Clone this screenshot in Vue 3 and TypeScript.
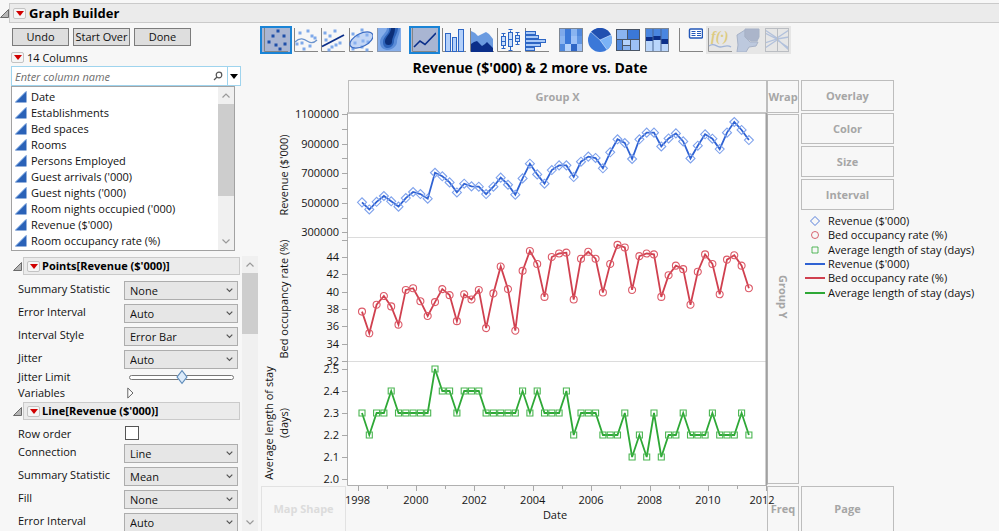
<script setup lang="ts">
import { ref } from 'vue'

type Shape = 'diamond' | 'circle' | 'square'
interface Series {
  label: string
  shape: Shape
  line: string
  mark: string
  values: number[]
  y: (v: number) => number
}

const columns = [
  'Date', 'Establishments', 'Bed spaces', 'Rooms', 'Persons Employed',
  "Guest arrivals ('000)", "Guest nights ('000)", "Room nights occupied ('000)",
  "Revenue ($'000)", 'Room occupancy rate (%)',
]

const pointSettings = [
  { id: 'p-stat', label: 'Summary Statistic', value: 'None' },
  { id: 'p-err', label: 'Error Interval', value: 'Auto' },
  { id: 'p-style', label: 'Interval Style', value: 'Error Bar' },
  { id: 'p-jitter', label: 'Jitter', value: 'Auto' },
]
const lineSettings = [
  { id: 'l-conn', label: 'Connection', value: 'Line' },
  { id: 'l-stat', label: 'Summary Statistic', value: 'Mean' },
  { id: 'l-fill', label: 'Fill', value: 'None' },
  { id: 'l-err', label: 'Error Interval', value: 'Auto' },
]

const filter = ref('')
const jitter = ref(50)
const rowOrder = ref(false)

const series: Series[] = [
  {
    label: "Revenue ($'000)", shape: 'diamond', line: '#2f62d3', mark: '#7fa2ec',
    values: [503, 455, 507, 546, 510, 474, 532, 573, 559, 528, 703, 679, 638, 570, 629, 611, 609, 559,
      609, 670, 622, 555, 665, 764, 692, 629, 721, 753, 753, 674, 778, 812, 803, 733, 841, 929, 904, 796,
      929, 974, 974, 881, 935, 969, 915, 800, 886, 963, 933, 863, 974, 1046, 992, 924],
    y: (v) => 6 + (1100 - v) * 0.148,
  },
  {
    label: 'Bed occupancy rate (%)', shape: 'circle', line: '#d0404f', mark: '#dc5a68',
    values: [37.7, 35.2, 38.5, 39.5, 38.3, 36.2, 40.2, 40.4, 38.9, 37.2, 38.8, 40.3, 39.6, 36.6, 39.7,
      39.1, 40.2, 35.8, 39.8, 42.9, 40.3, 35.5, 42.4, 44.7, 43.2, 39.4, 44, 44.4, 44.5, 39.1, 43.8, 44.6,
      43.8, 39.9, 43.2, 45.4, 45.1, 40.2, 44.1, 44.4, 44.3, 39.4, 41.9, 43, 42.6, 38.5, 42.3, 44.3, 43.2,
      39.7, 43.7, 44.2, 43, 40.4],
    y: (v) => 149 + (44 - v) * 8.67,
  },
  {
    label: 'Average length of stay (days)', shape: 'square', line: '#2ea836', mark: '#4ab551',
    values: [2.3, 2.2, 2.3, 2.3, 2.4, 2.3, 2.3, 2.3, 2.3, 2.3, 2.5, 2.4, 2.4, 2.3, 2.4, 2.4, 2.4, 2.3,
      2.3, 2.3, 2.3, 2.3, 2.4, 2.3, 2.4, 2.3, 2.3, 2.3, 2.4, 2.2, 2.3, 2.3, 2.3, 2.2, 2.2, 2.2, 2.3, 2.1,
      2.2, 2.1, 2.3, 2.1, 2.2, 2.2, 2.3, 2.2, 2.2, 2.2, 2.3, 2.2, 2.2, 2.2, 2.3, 2.2],
    y: (v) => 261 + (2.5 - v) * 220,
  },
]

const px = (i: number) => 101 + i * 7.3
const path = (s: Series) => s.values.map((v, i) => `${px(i).toFixed(1)},${s.y(v).toFixed(1)}`).join(' ')
const markPath = (shape: Shape, x: number, y: number): string => {
  if (shape === 'diamond') return `M${x - 4.5} ${y}l4.5 -4.5l4.5 4.5l-4.5 4.5z`
  if (shape === 'square') return `M${x - 3} ${y - 3}h6v6h-6z`
  return `M${x - 3.5} ${y}a3.5 3.5 0 1 0 7 0a3.5 3.5 0 1 0 -7 0z`
}

const yTicks = [
  ...[1100, 900, 700, 500, 300].map((v) => ({ text: `${v}000`, y: series[0].y(v) })),
  ...[44, 42, 40, 38, 36, 34, 32].map((v) => ({ text: String(v), y: series[1].y(v) })),
  ...[2.5, 2.4, 2.3, 2.2, 2.1, 2.0].map((v) => ({ text: v.toFixed(1), y: series[2].y(v) })),
]
const minorY = [1000, 800, 600, 400].map((v) => series[0].y(v)).concat(132)
const years = Array.from({ length: 15 }, (_, i) => ({ year: 1998 + i, x: 96.5 + i * 29.2 }))

const zones = ['Overlay', 'Color', 'Size', 'Interval']

const iconGroups: { name: string; on?: boolean; off?: boolean }[][] = [
  [{ name: 'Points', on: true }, { name: 'Smoother' }, { name: 'Line of Fit' }, { name: 'Ellipse' }, { name: 'Contour' }],
  [{ name: 'Line', on: true }, { name: 'Bar' }, { name: 'Area' }, { name: 'Box Plot' }, { name: 'Histogram' }],
  [{ name: 'Heatmap' }, { name: 'Pie' }, { name: 'Treemap' }, { name: 'Mosaic' }],
  [{ name: 'Caption Box' }, { name: 'Formula', off: true }, { name: 'Map Shapes', off: true }, { name: 'Parallel', off: true }],
]
const noAxis = ['Contour', 'Heatmap', 'Pie', 'Treemap', 'Mosaic', 'Map Shapes', 'Parallel']

const dots: Record<string, number[][]> = {
  Points: [[14, 3], [9, 8], [20, 8], [5, 14], [12, 17], [21, 16], [16, 21]],
  Smoother: [[14, 3], [6, 5], [18, 8], [21, 10], [3, 16], [8, 15], [16, 18], [10, 21]],
  'Line of Fit': [[14, 3], [4, 5], [9, 8], [5, 12], [19, 15], [15, 17], [11, 19], [8, 22]],
  Ellipse: [[13, 2], [4, 6], [9, 8], [18, 7], [6, 15], [14, 13], [19, 14], [4, 21], [13, 19], [18, 22]],
}
const heat = ['#7fa9ea', '#3b78d8', '#8ab4f0', '#4f88dd', '#8ab4f0', '#3b78d8', '#9cc0f6', '#5f95e3',
  '#4f88dd', '#b4d2fb', '#2f66c6', '#9cc0f6']
</script>

<template>
  <div class="app">
    <header class="titlebar">
      <svg class="disclose" viewBox="0 0 9 9" width="9" height="9"><path d="M.5 8.5h8v-8z" /></svg>
      <div class="bar">
        <button class="red" aria-label="Graph Builder menu"><svg viewBox="0 0 8 5" width="8" height="5"><path d="M0 0h8L4 5z" /></svg></button>
        <h1>Graph Builder</h1>
      </div>
    </header>

    <div class="body">
      <aside class="left">
        <div class="actions">
          <button>Undo</button><button>Start Over</button><button>Done</button>
        </div>
        <div class="count">
          <button class="red" aria-label="Columns menu"><svg viewBox="0 0 8 5" width="8" height="5"><path d="M0 0h8L4 5z" /></svg></button>
          <span>14 Columns</span>
        </div>
        <div class="search">
          <input v-model="filter" type="text" placeholder="Enter column name" aria-label="Enter column name" />
          <svg class="lens" viewBox="0 0 10 10" width="10" height="10"><circle cx="6" cy="4" r="2.8" /><path d="M4 6L1 9" /></svg>
          <button aria-label="Search options"><svg viewBox="0 0 8 5" width="8" height="5"><path d="M0 0h8L4 5z" /></svg></button>
        </div>
        <div class="list">
          <ul>
            <li v-for="c in columns" :key="c">
              <svg viewBox="0 0 12 12" width="12" height="12"><path class="tri" d="M0 11.5H11.5V0z" /><path class="tri-edge" d="M.5 11L11 .5" /></svg>
              {{ c }}
            </li>
          </ul>
          <div class="scroll">
            <svg viewBox="0 0 8 5" width="8" height="5"><path d="M.5 4.5L4 1l3.5 3.5" /></svg>
            <i class="thumb"></i>
            <svg viewBox="0 0 8 5" width="8" height="5"><path d="M.5 .5L4 4 7.5 .5" /></svg>
          </div>
        </div>

        <div class="settings">
          <div class="panels">
            <section>
              <div class="sub">
                <svg class="disclose" viewBox="0 0 9 9" width="9" height="9"><path d="M.5 8.5h8v-8z" /></svg>
                <div class="bar">
                  <button class="red" aria-label="Points menu"><svg viewBox="0 0 8 5" width="8" height="5"><path d="M0 0h8L4 5z" /></svg></button>
                  <h2>Points[Revenue ($'000)]</h2>
                </div>
              </div>
              <div v-for="s in pointSettings" :key="s.id" class="field">
                <label :for="s.id">{{ s.label }}</label>
                <div class="drop">
                  <select :id="s.id"><option>{{ s.value }}</option></select>
                  <svg viewBox="0 0 7 5" width="7" height="5"><path d="M.7 .7L3.5 3.5 6.3 .7" /></svg>
                </div>
              </div>
              <div class="field slim">
                <label for="jitter">Jitter Limit</label>
                <input id="jitter" v-model="jitter" type="range" min="0" max="100" />
              </div>
              <div class="field slim">
                <span>Variables</span>
                <button class="expand" aria-label="Show variables"><svg viewBox="0 0 7 12" width="7" height="12"><path d="M.8 1v10L6 6z" /></svg></button>
              </div>
            </section>
            <section>
              <div class="sub">
                <svg class="disclose" viewBox="0 0 9 9" width="9" height="9"><path d="M.5 8.5h8v-8z" /></svg>
                <div class="bar">
                  <button class="red" aria-label="Line menu"><svg viewBox="0 0 8 5" width="8" height="5"><path d="M0 0h8L4 5z" /></svg></button>
                  <h2>Line[Revenue ($'000)]</h2>
                </div>
              </div>
              <div class="field check">
                <label for="order">Row order</label>
                <input id="order" v-model="rowOrder" type="checkbox" />
              </div>
              <div v-for="s in lineSettings" :key="s.id" class="field">
                <label :for="s.id">{{ s.label }}</label>
                <div class="drop">
                  <select :id="s.id"><option>{{ s.value }}</option></select>
                  <svg viewBox="0 0 7 5" width="7" height="5"><path d="M.7 .7L3.5 3.5 6.3 .7" /></svg>
                </div>
              </div>
            </section>
          </div>
          <div class="scroll tall">
            <svg viewBox="0 0 8 5" width="8" height="5"><path d="M.5 4.5L4 1l3.5 3.5" /></svg>
            <i class="thumb"></i>
            <svg viewBox="0 0 8 5" width="8" height="5"><path d="M.5 .5L4 4 7.5 .5" /></svg>
          </div>
        </div>
      </aside>

      <main class="work">
        <div class="tools">
          <div v-for="(g, gi) in iconGroups" :key="gi" class="group">
            <button v-for="t in g" :key="t.name" :class="{ on: t.on, off: t.off }" :disabled="t.off" :aria-label="t.name">
              <svg viewBox="0 0 24 24" width="24" height="24">
                <path v-if="!noAxis.includes(t.name)" class="axis" d="M.5 0V23.5H24" />
                <g v-if="dots[t.name]">
                  <rect v-for="(d, i) in dots[t.name]" :key="i" :x="d[0] - 1.5" :y="d[1] - 1.5" width="3" height="3" :fill="t.on ? '#1f4fa8' : '#7fa9ea'" />
                </g>
                <path v-if="t.name === 'Smoother'" d="M1 14C6 9 10 11 14 13.5S21 14 23 12" fill="none" stroke="#6b93cc" stroke-width="1.3" />
                <path v-if="t.name === 'Line of Fit'" d="M1 18.5L23 7" fill="none" stroke="#0b2f8a" stroke-width="1.8" />
                <ellipse v-if="t.name === 'Ellipse'" cx="12.5" cy="12" rx="12.5" ry="6.5" transform="rotate(-27 12.5 12)" fill="#8fb6f3" fill-opacity=".5" stroke="#3b6cc4" stroke-width="1.2" />
                <g v-if="t.name === 'Contour'">
                  <rect width="24" height="24" fill="#86aeea" />
                  <path d="M10 0C10 5 3 8 3 14s4 8 8 8 9-4 9-8 3-8 3-14z" fill="#5a8cd8" />
                  <path d="M12 0c1 6-6 8-6 14 0 4 2 6 5 6s6-3 6-7 4-8 4-13z" fill="#2c62b8" />
                  <path d="M14 0c0 6-6 9-6 13.5a3.5 3.5 0 0 0 7 0C15 10 18 6 18 0z" fill="#0c2f78" />
                  <path d="M.5 0v23.5H24" fill="none" stroke="#8a97ac" />
                </g>
                <path v-if="t.name === 'Line'" d="M2 19L8 13l5 3.5L24 5" fill="none" stroke="#0b2f8a" stroke-width="1.6" />
                <g v-if="t.name === 'Bar'" fill="#b3d0fa" stroke="#2d66c4">
                  <rect x="3.5" y="5.5" width="5" height="18" /><rect x="10.5" y="9.5" width="4" height="14" /><rect x="16.5" y="1.5" width="5" height="22" />
                </g>
                <g v-if="t.name === 'Area'">
                  <path d="M1 3l4 2 3 3 4-2 4-2 3 2 4 5v13H1z" fill="#6b9be0" />
                  <path d="M1 16l3-2 3-1 2 2 3 3 3-2 2-2 3 3 3 3v4H1z" fill="#0b2f8a" />
                </g>
                <g v-if="t.name === 'Box Plot'" fill="#c8defc" stroke="#2d66c4">
                  <path d="M6.5 5.5v15M13.5 2.5v20M20.5 4.5v12M4.5 5.5h4M11.5 1.5h4M18.5 4.5h4M4.5 20.5h4M11.5 22.5h4M18.5 16.5h4" />
                  <rect x="4.5" y="8.5" width="4" height="9" /><rect x="11.5" y="4.5" width="4" height="14" /><rect x="18.5" y="7.5" width="4" height="6" />
                  <path d="M4.5 13.5h4M11.5 11.5h4M18.5 10.5h4" />
                </g>
                <g v-if="t.name === 'Histogram'" fill="#a9caf8" stroke="#2d66c4">
                  <rect x=".5" y="3.5" width="10" height="3" /><rect x=".5" y="7.5" width="13" height="3" /><rect x=".5" y="11.5" width="20" height="3" /><rect x=".5" y="15.5" width="15" height="3" /><rect x=".5" y="19.5" width="9" height="3" />
                </g>
                <g v-if="t.name === 'Heatmap'">
                  <rect v-for="(c, i) in heat" :key="i" :x="(i % 4) * 6" :y="Math.floor(i / 4) * 8" width="6" height="8" :fill="c" />
                  <rect x=".5" y=".5" width="23" height="23" fill="none" stroke="#7d8794" />
                </g>
                <g v-if="t.name === 'Pie'">
                  <circle cx="12" cy="12" r="12" fill="#3b78d8" />
                  <path d="M12 12L3 4A12 12 0 0 1 23 7z" fill="#2150b0" />
                  <path d="M12 12L23 7A12 12 0 0 1 19 21.7z" fill="#7ab2f6" />
                  <path d="M3 4l9 8 11-5M12 12l7 9.7" fill="none" stroke="#dce9fb" stroke-width=".6" />
                </g>
                <g v-if="t.name === 'Treemap'" stroke="#4a5566">
                  <rect x=".5" y="1.5" width="11" height="10" fill="#8ab4f0" /><rect x="11.5" y="1.5" width="12" height="10" fill="#3b78d8" />
                  <rect x=".5" y="11.5" width="6" height="11" fill="#4f88dd" /><rect x="6.5" y="11.5" width="8" height="6" fill="#b4d2fb" /><rect x="6.5" y="17.5" width="8" height="5" fill="#8ab4f0" /><rect x="14.5" y="11.5" width="9" height="11" fill="#9cc0f6" />
                </g>
                <g v-if="t.name === 'Mosaic'">
                  <rect width="24" height="24" fill="#b9d5fb" />
                  <path d="M0 0h8v9H0zM8 0h8v8H8zM16 0h8v11h-8z" fill="#4a86e0" />
                  <path d="M0 9h8v4H0zM8 8h8v4H8zM16 11h8v5h-8z" fill="#0b2f8a" />
                  <path d="M8 0v24M16 0v24" stroke="#4a6694" /><rect x=".5" y=".5" width="23" height="23" fill="none" stroke="#7d8794" />
                </g>
                <g v-if="t.name === 'Caption Box'">
                  <rect x="10.5" y="1" width="13" height="9" rx="1" fill="#fff" stroke="#2458b8" stroke-width="1.5" />
                  <path d="M12.5 3.5h4M12.5 5.5h4M12.5 7.5h4M18 3.5h4M18 5.5h4M18 7.5h4" stroke="#2458b8" />
                </g>
                <g v-if="t.name === 'Formula'">
                  <text class="fx" x="3" y="13">f(·)</text>
                  <path d="M1 18c5-4 7 1 11 1s7-3 11 0" fill="none" stroke="#8fa8d4" stroke-width="1.3" />
                </g>
                <g v-if="t.name === 'Map Shapes'" stroke="#98a6c0">
                  <path d="M1 7L9 2v7l5 5h8l-2 4-7 1-3 5H1l1-7z" fill="#b4c3dd" />
                  <path d="M9 1h14v8l-2 4h-6l-6-4z" fill="#9da9c4" />
                </g>
                <g v-if="t.name === 'Parallel'" fill="none">
                  <path d="M0 2l12 8L24 2M0 5l12 6 12-2M0 20l12-8 12 8M0 15l12-4 12 11" stroke="#a5b8da" stroke-width="1.3" />
                  <path d="M.5 0v24M12.5 0v24M23.5 0v24M0 .5h24M0 23.5h24" stroke="#b0b4ba" />
                </g>
              </svg>
            </button>
          </div>
        </div>

        <div class="graph">
          <h3>Revenue ($'000) &amp; 2 more vs. Date</h3>
          <button class="zone groupx">Group X</button>
          <button class="zone wrap">Wrap</button>
          <button class="zone groupy"><span>Group Y</span></button>
          <button class="zone freq">Freq</button>
          <button class="zone page">Page</button>
          <button class="zone faint map">Map Shape</button>

          <svg class="plot" viewBox="0 0 506 417" role="img" aria-label="Revenue, bed occupancy rate and average length of stay by date">
            <rect x="86" y="5" width="420" height="372" fill="#fff" />
            <path d="M87 129.5H505M87 253.5H505" stroke="#dcdcdc" />
            <path d="M86 5H506" stroke="#c6c6c6" stroke-width="2" />
            <path d="M86.5 5V377.5H506" fill="none" stroke="#b0b0b0" />
            <path d="M505.5 5V377" stroke="#a0a0a0" stroke-width="2" />
            <g class="ticks">
              <path v-for="t in yTicks" :key="t.text" :d="`M81 ${Math.round(t.y) + 0.5}h6`" />
              <path v-for="m in minorY" :key="m" :d="`M81 ${Math.round(m) + 0.5}h6`" />
              <path v-for="(t, i) in years" :key="t.year" :d="`M${Math.round(t.x) + 0.5} 378v${i % 2 ? 3 : 5}`" />
            </g>
            <text v-for="t in yTicks" :key="t.text" text-anchor="end" x="78" :y="t.y + 4">{{ t.text }}</text>
            <template v-for="(t, i) in years" :key="t.year">
              <text v-if="i % 2 === 0" text-anchor="middle" :x="i === 14 ? 501 : t.x" y="396">{{ t.year }}</text>
            </template>
            <text text-anchor="middle" x="294" y="411">Date</text>
            <text text-anchor="middle" transform="translate(27 67) rotate(-90)">Revenue ($'000)</text>
            <text text-anchor="middle" transform="translate(27 191) rotate(-90)">Bed occupancy rate (%)</text>
            <text text-anchor="middle" transform="translate(12 315) rotate(-90)">Average length of stay</text>
            <text text-anchor="middle" transform="translate(27 315) rotate(-90)">(days)</text>
            <g v-for="s in series" :key="s.label" fill="none">
              <polyline :points="path(s)" :stroke="s.line" stroke-width="1.8" />
              <path v-for="(v, i) in s.values" :key="i" :d="markPath(s.shape, px(i), s.y(v))" :stroke="s.mark" stroke-width="1.1" />
            </g>
          </svg>

          <div class="side">
            <button v-for="z in zones" :key="z" class="zone">{{ z }}</button>
            <ul class="legend">
              <li v-for="s in series" :key="s.label">
                <svg viewBox="0 0 20 12" width="20" height="12"><path :d="markPath(s.shape, 10, 6)" fill="none" :stroke="s.line" stroke-opacity=".8" /></svg>{{ s.label }}
              </li>
              <li v-for="s in series" :key="s.line">
                <svg viewBox="0 0 20 12" width="20" height="12"><path d="M0 6H20" :stroke="s.line" stroke-width="2" /></svg>{{ s.label }}
              </li>
            </ul>
          </div>
        </div>
      </main>
    </div>
  </div>
</template>

<style>
body { background: #f7f7f7; }
</style>

<style scoped>
* { box-sizing: border-box; }
.app { display: flex; flex-direction: column; height: 100vh; overflow: hidden; padding-top: 3px; font: 11px/16px "Open Sans", "Noto Sans", sans-serif; color: #111; background: #f7f7f7; }
button, input, select { font: inherit; color: inherit; margin: 0; padding: 0; }
h1, h2, h3, ul { margin: 0; padding: 0; list-style: none; }
svg { display: block; flex: none; }
.titlebar { display: flex; align-items: center; height: 20px; flex: none; }
.bar { display: flex; align-items: center; flex: 1; gap: 3px; padding-left: 3px; height: 20px; background: #ebebeb; border: 1px solid #cacaca; }
.titlebar .bar { border-right: 0; }
.disclose path { fill: #b5b5b5; stroke: #6a6a6a; }
h1 { font-size: 13px; line-height: 18px; font-weight: 700; color: #000; }
h2 { font-size: 11px; line-height: 16px; font-weight: 700; color: #000; }
.red { display: flex; align-items: center; justify-content: center; width: 13px; height: 11px; border: 1px solid #c3c3c3; border-radius: 2px; background: #f5f5f5; }
.red path { fill: #d00000; }

.body { display: flex; flex: 1; min-height: 0; }
.left { display: flex; flex-direction: column; width: 258px; flex: none; padding-top: 5px; }
.actions { display: flex; gap: 4px; padding-left: 12px; }
.actions button { width: 57px; height: 18px; line-height: 14px; border: 1px solid #7c7c7c; background: #dedede; }
.count { display: flex; align-items: center; gap: 3px; height: 20px; padding: 3px 0 0 11px; }
.search { display: flex; align-items: center; margin: 0 17px 0 11px; height: 20px; background: #fff; border: 1px solid #9fd4ee; }
.search input { flex: 1; min-width: 0; height: 18px; padding-left: 3px; border: 0; outline: 0; background: none; font-style: italic; }
.search input::placeholder { color: #6d6d6d; opacity: 1; }
.search .lens { margin-right: 4px; fill: none; stroke: #555; stroke-width: 1.2; }
.search button { display: flex; align-items: center; justify-content: center; width: 13px; height: 18px; border: 0; border-left: 1px solid #9fd4ee; background: #fff; }
.list { display: flex; margin: 0 23px 0 11px; height: 165px; flex: none; border: 1px solid #a2a2a2; background: #fff; }
.list ul { flex: 1; padding-top: 2px; overflow: hidden; }
.list li { display: flex; align-items: center; gap: 4px; height: 16px; padding-left: 3px; white-space: nowrap; }
.tri { fill: #2a62b8; }
.tri-edge { stroke: #7ba6e0; fill: none; }
.scroll { display: flex; flex-direction: column; align-items: center; width: 16px; background: #f0f0f0; }
.scroll svg { margin: 6px 0; fill: none; stroke: #9a9a9a; stroke-width: 1.2; }
.scroll .thumb { width: 16px; height: 92px; background: #cdcdcd; }
.scroll svg:last-child { margin-top: auto; }
.scroll.tall .thumb { height: 61px; }

.settings { display: flex; flex: 1; min-height: 0; padding-top: 5px; }
.panels { flex: 1; min-width: 0; padding-left: 13px; overflow: hidden; }
.sub { display: flex; align-items: center; gap: 1px; height: 18px; margin: 1px 2px 6px 0; }
.sub .bar { height: 18px; gap: 2px; }
.field { display: grid; grid-template-columns: 106px 1fr; align-items: start; height: 19px; margin-top: 4px; padding: 0 4px 0 5px; }
.field label, .field > span { line-height: 16px; }
.field.slim { height: 16px; margin-top: 0; align-items: center; }
.field.check { height: 14px; }
.drop { display: grid; height: 19px; }
.drop select { grid-area: 1 / 1; appearance: none; padding: 0 5px; border: 1px solid #adadad; border-radius: 0; background: #e6e6e6; }
.drop svg { grid-area: 1 / 1; place-self: center end; margin-right: 5px; fill: none; stroke: #555; stroke-width: 1.2; pointer-events: none; }
.field input[type="range"] { appearance: none; width: 105px; height: 13px; margin-left: 5px; background: none; }
.field input[type="range"]::-webkit-slider-runnable-track { height: 5px; border: 1px solid #777; border-radius: 3px; background: #fff; }
.field input[type="range"]::-webkit-slider-thumb { appearance: none; box-sizing: border-box; width: 8px; height: 8px; margin-top: -3px; border: 1px solid #5f8bb8; background: #dcebfa; transform: scaleY(1.3) rotate(45deg); }
.field input[type="checkbox"] { appearance: none; width: 14px; height: 14px; border: 1px solid #555; background: #fff; margin-left: 1px; }
.expand { width: 10px; height: 12px; margin-left: 3px; border: 0; background: none; }
.expand path { fill: #fff; stroke: #666; }

.work { display: flex; flex-direction: column; flex: 1; min-width: 0; padding: 3px 0 0 2px; }
.tools { display: grid; grid-template-columns: 5fr 5fr 4fr 4fr; gap: 6px; width: 531px; height: 29px; }
.group { display: flex; }
.tools button { display: flex; align-items: center; justify-content: center; flex: 1; min-width: 0; border: 0; background: none; }
.tools button.on { background: #a9b5d2; border: 2px solid #1a84d6; }
.tools button.off { background: #e6e6e6; }
.tools button.off svg { opacity: 0.8; }
.axis { fill: none; stroke: #858585; }
.fx { font: italic 700 14px "Liberation Serif", serif; fill: #dcc568; }

.graph { display: grid; grid-template-columns: 87px minmax(0, 1fr) 32px 200px; grid-template-rows: 26px 34px minmax(0, 372px) 46px; padding-left: 1px; }
h3 { grid-area: 1 / 1 / 2 / 4; font-size: 14px; line-height: 28px; font-weight: 700; color: #000; text-align: center; }
.zone { border: 1px solid #bdbdbd; background: #f7f7f7; color: #a6a6a6; font-weight: 700; line-height: 16px; }
.groupx { grid-area: 2 / 2; height: 33px; }
.wrap { grid-area: 2 / 3; height: 33px; }
.groupy { grid-area: 3 / 3; margin-bottom: 2px; }
.groupy span { writing-mode: vertical-rl; }
.freq { grid-area: 4 / 3; }
.page { grid-area: 4 / 4; width: 93px; margin-left: 2px; }
.map { grid-area: 4 / 1; margin-right: 2px; }
.faint { border-color: #e2e2e2; color: #dcdcdc; }
.plot { grid-area: 3 / 1 / 5 / 3; width: 100%; margin-top: -6px; overflow: visible; pointer-events: none; z-index: 1; }
.plot text { font-size: 11px; fill: #151515; }
.ticks { stroke: #a8a8a8; }
.side { grid-area: 2 / 4 / 4 / 5; display: flex; flex-direction: column; gap: 2px; padding-left: 2px; }
.side .zone { width: 93px; height: 31px; }
.legend { display: grid; grid-auto-rows: 1fr; height: 86px; margin-top: 2px; padding-left: 4px; }
.legend li { display: flex; align-items: center; gap: 3px; line-height: 14px; white-space: nowrap; }
</style>
